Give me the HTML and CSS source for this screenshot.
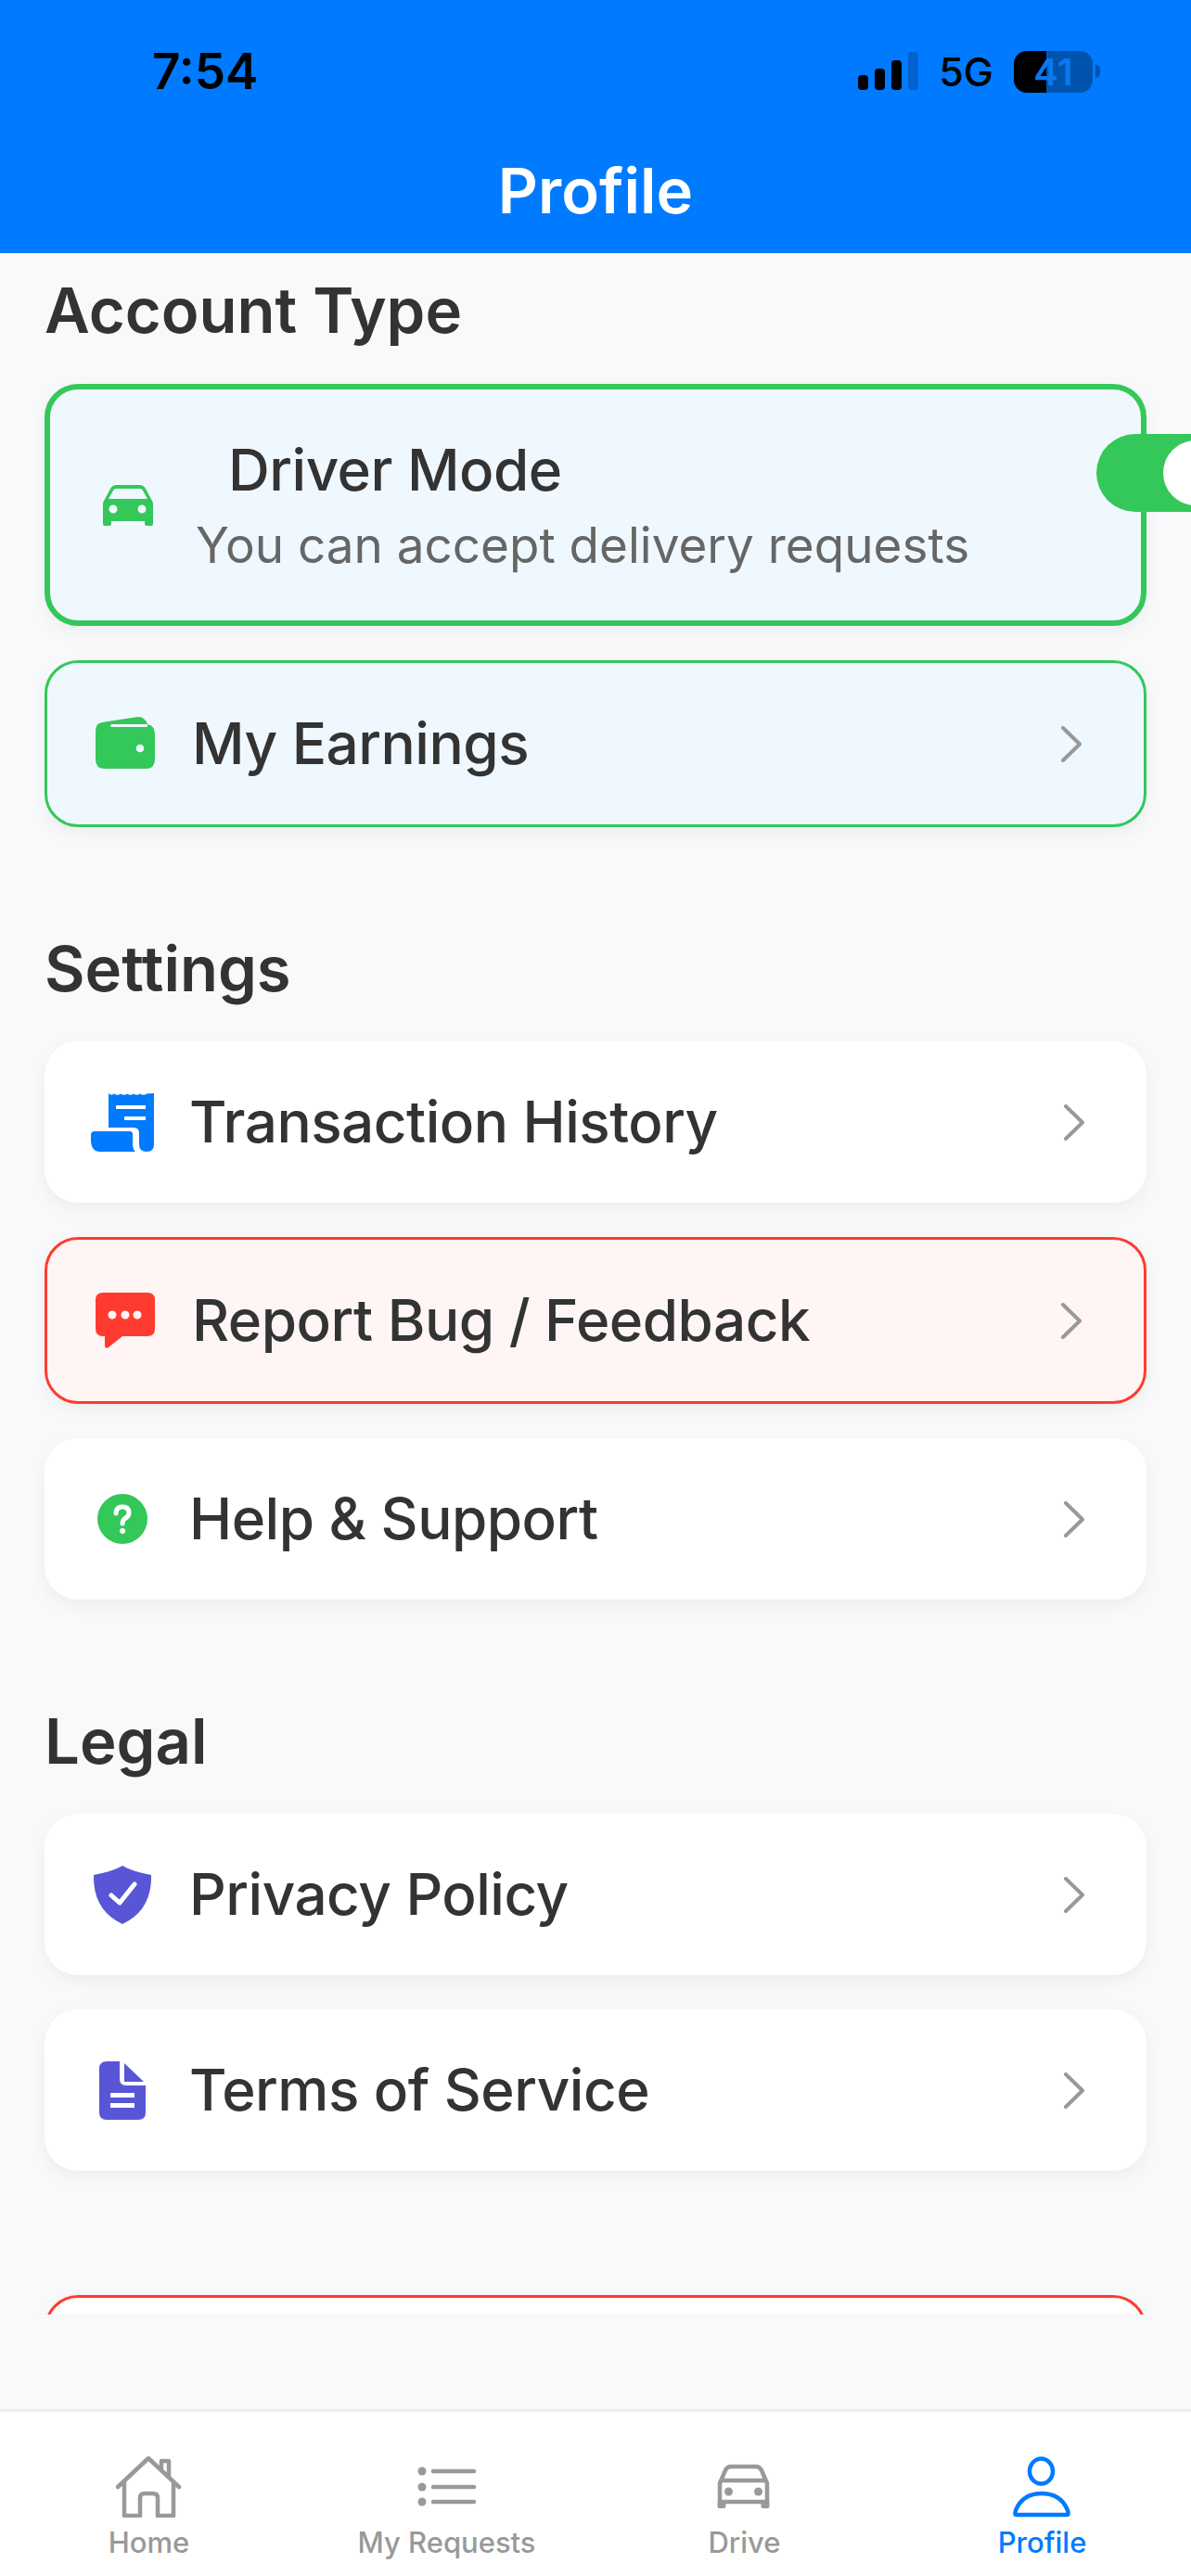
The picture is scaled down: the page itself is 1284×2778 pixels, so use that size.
FILE: index.html
```html
<!DOCTYPE html>
<html lang="en">

<head>
    <meta charset="UTF-8">
    <meta name="viewport" content="width=device-width, initial-scale=1.0">
    <title>Profile</title>
    <link rel="stylesheet" href="styles.css">
</head>

<body>
    <div class="app">
        <header class="header">
            <div class="status">
                <span class="time">7:54</span>
                <div class="status-right">
                    <div class="signal">
                        <span class="bar bar1"></span>
                        <span class="bar bar2"></span>
                        <span class="bar bar3"></span>
                        <span class="bar bar4"></span>
                    </div>
                    <span class="net">5G</span>
                    <div class="battery-wrap">
                        <div class="battery">41</div>
                        <span class="battery-tip"></span>
                    </div>
                </div>
            </div>
            <h1 class="title">Profile</h1>
        </header>

        <main class="scroll">
            <h2 class="section-title">Account Type</h2>
            <div class="list list-account">
                <div class="card card-green-thick">
                    <svg class="icon-car" width="54" height="44" viewBox="0 0 54 44">
                        <path class="fill-green" fill-rule="evenodd" d="M15 0H39Q44 0 46 4L54 19V42Q54 44 52 44H47Q45 44 45 42V39H9V42Q9 44 7 44H2Q0 44 0 42V19L8 4Q10 0 15 0ZM14 4Q12 4 11 6L6 15H48L43 6Q42 4 40 4ZM11 21.500A4.500 4.500 0 1 0 11 30.500A4.500 4.500 0 1 0 11 21.500ZM42 21.500A4.500 4.500 0 1 0 42 30.500A4.500 4.500 0 1 0 42 21.500Z" />
                    </svg>
                    <div class="driver-text">
                        <div class="driver-title">Driver Mode</div>
                        <div class="driver-sub">You can accept delivery requests</div>
                    </div>
                    <div class="toggle"><span class="thumb"></span></div>
                </div>
                <div class="card card-green row">
                    <svg class="icon" width="72" height="58" viewBox="0 0 72 58">
                        <path class="fill-green" fill-rule="evenodd" d="M4 15Q4 7 11 6L50 0Q57 0 60 8Q68 9 68 20V46Q68 56 58 56H14Q4 56 4 46ZM21.500 8Q20 8 20 9.500Q20 11 21.500 11H60V8ZM52 29.700A4.300 4.300 0 1 0 52 38.300A4.300 4.300 0 1 0 52 29.700Z" />
                    </svg>
                    <span class="row-label">My Earnings</span>
                    <svg class="chevron" width="24" height="39" viewBox="0 0 24 39"><path d="M3 2L21 19.500L3 37" /></svg>
                </div>
            </div>

            <h2 class="section-title section-gap">Settings</h2>
            <div class="list">
                <div class="card row">
                    <svg class="icon" width="72" height="63" viewBox="0 0 72 63">
                        <path class="fill-blue" fill-rule="evenodd" d="M21 0Q24 3 27 0.500Q31 3 34 0.500Q38 3 41 0.500Q45 3 48 0.500Q52 3 55 0.500Q59 3 62 0.500L70 0V55Q70 63 62 63Q54 63 54 55V43Q54 37 48 37H21ZM29 13V17H61V13ZM38 25V29H61V25Z" />
                        <path class="fill-blue" d="M6 41H44Q47 41 47 44V55Q47 60 50 63H12Q2 63 2 50V45Q2 41 6 41Z" />
                    </svg>
                    <span class="row-label">Transaction History</span>
                    <svg class="chevron" width="24" height="39" viewBox="0 0 24 39"><path d="M3 2L21 19.500L3 37" /></svg>
                </div>
                <div class="card card-red row">
                    <svg class="icon" width="72" height="60" viewBox="0 0 72 60">
                        <path class="fill-red" fill-rule="evenodd" d="M12 0H60Q68 0 68 8V39Q68 47 60 47H33L18 59Q14 61 14 57V47H12Q4 47 4 39V8Q4 0 12 0ZM22 19.500A4.500 4.500 0 1 0 22 28.500A4.500 4.500 0 1 0 22 19.500ZM36 19.500A4.500 4.500 0 1 0 36 28.500A4.500 4.500 0 1 0 36 19.500ZM49 19.500A4.500 4.500 0 1 0 49 28.500A4.500 4.500 0 1 0 49 19.500Z" />
                    </svg>
                    <span class="row-label">Report Bug / Feedback</span>
                    <svg class="chevron" width="24" height="39" viewBox="0 0 24 39"><path d="M3 2L21 19.500L3 37" /></svg>
                </div>
                <div class="card row">
                    <svg class="icon" width="72" height="54" viewBox="0 0 72 54">
                        <circle class="fill-green" cx="36" cy="27" r="27" />
                        <path class="stroke-white" d="M29 21Q29 14 36 14Q43 14 43 20.500Q43 24 39.500 26Q36 28 36 32" />
                        <circle class="fill-white" cx="36" cy="40" r="3" />
                    </svg>
                    <span class="row-label">Help &amp; Support</span>
                    <svg class="chevron" width="24" height="39" viewBox="0 0 24 39"><path d="M3 2L21 19.500L3 37" /></svg>
                </div>
            </div>

            <h2 class="section-title section-gap">Legal</h2>
            <div class="list">
                <div class="card row">
                    <svg class="icon" width="72" height="63" viewBox="0 0 72 63">
                        <path class="fill-purple" d="M36 0Q46 6 67 10Q68 48 36 63Q4 48 5 10Q26 6 36 0Z" />
                        <path class="stroke-white" d="M24 32L33 40L49 20" />
                    </svg>
                    <span class="row-label">Privacy Policy</span>
                    <svg class="chevron" width="24" height="39" viewBox="0 0 24 39"><path d="M3 2L21 19.500L3 37" /></svg>
                </div>
                <div class="card row">
                    <svg class="icon" width="72" height="63" viewBox="0 0 72 63">
                        <path class="fill-purple" fill-rule="evenodd" d="M19 0H33V19Q33 26 40 26H61V55Q61 63 53 63H19Q11 63 11 55V8Q11 0 19 0ZM23 34V39H49V34ZM23 45V50H49V45Z" />
                        <path class="fill-purple" d="M38 2L59 22H38Z" />
                    </svg>
                    <span class="row-label">Terms of Service</span>
                    <svg class="chevron" width="24" height="39" viewBox="0 0 24 39"><path d="M3 2L21 19.500L3 37" /></svg>
                </div>
            </div>

            <div class="card card-logout"></div>
        </main>

        <nav class="tabs">
            <div class="tab">
                <svg class="tab-icon" width="72" height="66" viewBox="0 0 72 66">
                    <path d="M2 33L35 2L68 33M9 27V64H26V45Q26 40 31 40H40Q45 40 45 45V64H62V27M49 14V5H57V21" />
                </svg>
                <span class="tab-label">Home</span>
            </div>
            <div class="tab">
                <svg class="tab-icon" width="72" height="66" viewBox="0 0 72 66">
                    <circle class="dot" cx="9" cy="16" r="4.500" />
                    <circle class="dot" cx="9" cy="33" r="4.500" />
                    <circle class="dot" cx="9" cy="49" r="4.500" />
                    <path d="M21 16H65M21 33H65M21 49H65" />
                </svg>
                <span class="tab-label">My Requests</span>
            </div>
            <div class="tab">
                <svg class="tab-icon" width="72" height="66" viewBox="0 0 72 66">
                    <path d="M21 11H48Q52 11 54 15L60 29V49H9V29L15 15Q17 11 21 11ZM12 26H57" />
                    <rect class="dot" x="6.500" y="48" width="9" height="8" rx="2" />
                    <rect class="dot" x="53.500" y="48" width="9" height="8" rx="2" />
                    <circle class="dot" cx="18.500" cy="38" r="4.500" />
                    <circle class="dot" cx="50.500" cy="38" r="4.500" />
                </svg>
                <span class="tab-label">Drive</span>
            </div>
            <div class="tab tab-active">
                <svg class="tab-icon" width="72" height="66" viewBox="0 0 72 66">
                    <ellipse cx="34.500" cy="16" rx="12.500" ry="13.500" />
                    <path d="M8 63Q5 63 7.500 57Q15 40 35 40Q55 40 62.500 57Q65 63 62 63Z" />
                </svg>
                <span class="tab-label">Profile</span>
            </div>
        </nav>
    </div>
</body>

</html>
```

FILE: styles.css
```css
body,
html {
    margin: 0;
    padding: 0;
    overflow: hidden;
}

body {
    font-family: Inter, "Liberation Sans", sans-serif;
    color: #333;
    background: #f8f9fa;
}

.app {
    width: 1284px;
    height: 2778px;
    display: flex;
    flex-direction: column;
    overflow: hidden;
}

/* header */
.header {
    height: 273px;
    flex-shrink: 0;
    background: #007aff;
    padding-top: 50px;
    box-sizing: border-box;
}

.status {
    height: 54px;
    padding: 0 98px 0 164px;
    display: flex;
    justify-content: space-between;
    align-items: center;
    color: #000;
}

.time {
    font-size: 53px;
    font-weight: 600;
}

.status-right {
    display: flex;
    align-items: center;
    gap: 22px;
}

.signal {
    display: flex;
    align-items: flex-end;
    gap: 7px;
    height: 41px;
    margin-top: -1px;
}

.bar {
    width: 11px;
    border-radius: 4px;
    background: #000;
}

.bar1 {
    height: 16px;
}

.bar2 {
    height: 23px;
}

.bar3 {
    height: 32px;
}

.bar4 {
    height: 41px;
    background: #0062cc;
}

.net {
    font-size: 43px;
    font-weight: 500;
}

.battery-wrap {
    display: flex;
    align-items: center;
    gap: 3px;
}

.battery {
    width: 85px;
    height: 45px;
    border-radius: 14px;
    background: linear-gradient(to right, #000 41%, #0054ae 41%);
    color: #0a78f0;
    font-size: 40px;
    font-weight: 600;
    line-height: 45px;
    text-align: center;
}

.battery-tip {
    width: 5px;
    height: 14px;
    border-radius: 0 7px 7px 0;
    background: #0054ae;
}

.title {
    margin: 66px 0 0;
    color: #fff;
    font-size: 67px;
    font-weight: 600;
    line-height: 72px;
    text-align: center;
}

/* scroll content */
.scroll {
    height: 2223px;
    flex-shrink: 0;
    overflow: hidden;
    padding: 22px 48px 0;
    box-sizing: border-box;
}

.section-title {
    margin: 0 0 39px;
    font-size: 67px;
    font-weight: 600;
    line-height: 80px;
}

.section-gap {
    margin-top: 113px;
    margin-bottom: 38px;
}

.list {
    display: flex;
    flex-direction: column;
    gap: 37px;
}

.card {
    background: #fff;
    border-radius: 36px;
    box-shadow: 0 6px 18px rgba(0, 0, 0, 0.05);
}

.row {
    display: flex;
    align-items: center;
    padding: 48px;
}

.card-green {
    background: #f0f8ff;
    border: 3px solid #34c759;
}

.card-green-thick {
    display: flex;
    align-items: center;
    padding: 48px;
    background: #f0f8ff;
    border: 6px solid #34c759;
}

.card-red {
    background: #fff5f5;
    border: 3px solid #ff3b30;
}

.card-logout {
    height: 180px;
    margin-top: 134px;
    box-sizing: border-box;
    border: 3px solid #ff3b30;
}

.icon {
    flex-shrink: 0;
    margin-right: 36px;
}

.icon-car {
    flex-shrink: 0;
    margin-left: 9px;
}

.row-label {
    flex: 1;
    font-size: 62px;
    font-weight: 500;
    line-height: 78px;
    letter-spacing: -0.5px;
}

.chevron {
    flex-shrink: 0;
    margin-right: 18px;
}

.chevron path {
    fill: none;
    stroke: #999;
    stroke-width: 4;
    stroke-linecap: round;
    stroke-linejoin: round;
}

.driver-text {
    flex: 1;
    margin-left: 46px;
}

.driver-title {
    margin-left: 35px;
    font-size: 62px;
    font-weight: 500;
    line-height: 78px;
    letter-spacing: -0.5px;
}

.driver-sub {
    margin-top: 9px;
    color: #666;
    font-size: 53px;
    line-height: 66px;
}

.toggle {
    flex-shrink: 0;
    align-self: flex-start;
    width: 153px;
    height: 84px;
    margin-right: -153px;
    padding: 7px 0 0 72px;
    box-sizing: border-box;
    border-radius: 42px;
    background: #34c759;
}

.thumb {
    display: block;
    width: 70px;
    height: 70px;
    border-radius: 50%;
    background: #fff;
}

.fill-green {
    fill: #34c759;
}

.fill-blue {
    fill: #007aff;
}

.fill-red {
    fill: #ff3b30;
}

.fill-purple {
    fill: #5856d6;
}

.fill-white {
    fill: #fff;
}

.stroke-white {
    fill: none;
    stroke: #fff;
    stroke-width: 5;
    stroke-linecap: round;
    stroke-linejoin: round;
}

/* bottom tabs */
.tabs {
    margin-top: auto;
    height: 180px;
    box-sizing: border-box;
    display: flex;
    padding-top: 48px;
    background: #fff;
    border-top: 3px solid #eee;
}

.tab {
    flex: 1;
    display: flex;
    flex-direction: column;
    align-items: center;
    color: #999;
}

.tab-icon {
    fill: none;
    stroke: #999;
    stroke-width: 4.500;
    stroke-linecap: round;
    stroke-linejoin: round;
}

.tab-icon .dot {
    fill: #999;
    stroke: none;
}

.tab-label {
    margin-top: 9px;
    font-size: 31px;
    font-weight: 500;
    line-height: 36px;
}

.tab-active {
    color: #007aff;
}

.tab-active .tab-icon {
    stroke: #007aff;
}
```
